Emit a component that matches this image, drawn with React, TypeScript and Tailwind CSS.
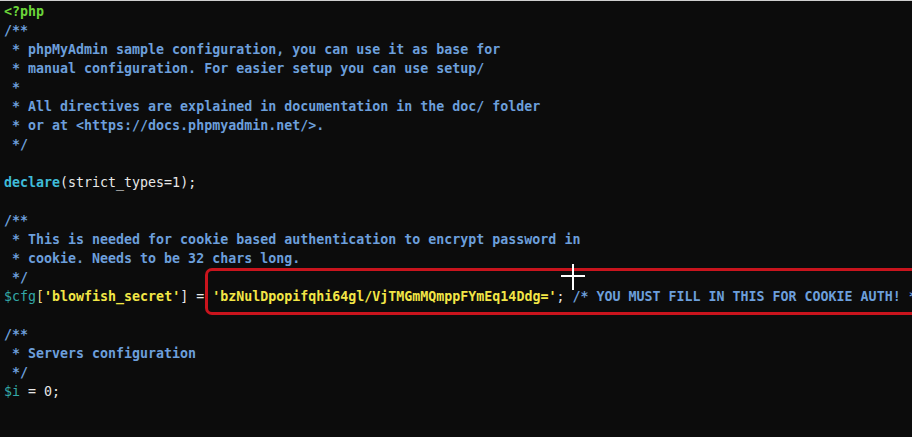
const C = "text-[#6c9fdb] font-bold"
const W = "text-[#e8e8e8]"
const Y = "text-[#f2e646] font-bold"
const V = "text-[#33a8a8]"

type Seg = [string, string]

const LINES: Seg[][] = [
  [["<?php", "text-[#6bd53a] font-bold"]],
  [["/**", C]],
  [[" * phpMyAdmin sample configuration, you can use it as base for", C]],
  [[" * manual configuration. For easier setup you can use setup/", C]],
  [[" *", C]],
  [[" * All directives are explained in documentation in the doc/ folder", C]],
  [[" * or at <https://docs.phpmyadmin.net/>.", C]],
  [[" */", C]],
  [],
  [
    ["declare", "text-[#3fbcd9] font-bold"],
    ["(strict_types=1);", W],
  ],
  [],
  [["/**", C]],
  [[" * This is needed for cookie based authentication to encrypt password in", C]],
  [[" * cookie. Needs to be 32 chars long.", C]],
  [[" */", C]],
  [
    ["$cfg", V],
    ["[", "text-[#e6dd8a]"],
    ["'blowfish_secret'", Y],
    ["] = ", W],
    ["'bzNulDpopifqhi64gl/VjTMGmMQmppFYmEq14Ddg='", Y],
    ["; ", W],
    ["/* YOU MUST FILL IN THIS FOR COOKIE AUTH! */", C],
  ],
  [],
  [["/**", C]],
  [[" * Servers configuration", C]],
  [[" */", C]],
  [
    ["$i", V],
    [" = 0;", W],
  ],
]

export default function App() {
  return (
    <div className="relative h-[437px] w-[912px] overflow-hidden bg-[#0c0c0c] border-t border-[#cfcfcf]">
      <pre
        className="pl-[4px] pt-[1px] text-[13.3px] leading-[19px] whitespace-pre"
        style={{ fontFamily: '"DejaVu Sans Mono", "Liberation Mono", monospace' }}
      >
        {LINES.map((line, i) => (
          <div key={i} className="h-[19px]">
            {line.map(([text, cls], j) => (
              <span key={j} className={cls}>
                {text}
              </span>
            ))}
          </div>
        ))}
      </pre>

      {/* highlight box */}
      <div className="absolute left-[205px] top-[267px] h-[47px] w-[730px] rounded-[7px] border-[3px] border-[#c9141d]" />

      {/* mouse cursor */}
      <svg className="absolute left-[560px] top-[262px]" width="26" height="28" viewBox="0 0 26 28">
        <path d="M1 13h24M13 1v26" stroke="#fff" strokeWidth="2" />
      </svg>
    </div>
  )
}
